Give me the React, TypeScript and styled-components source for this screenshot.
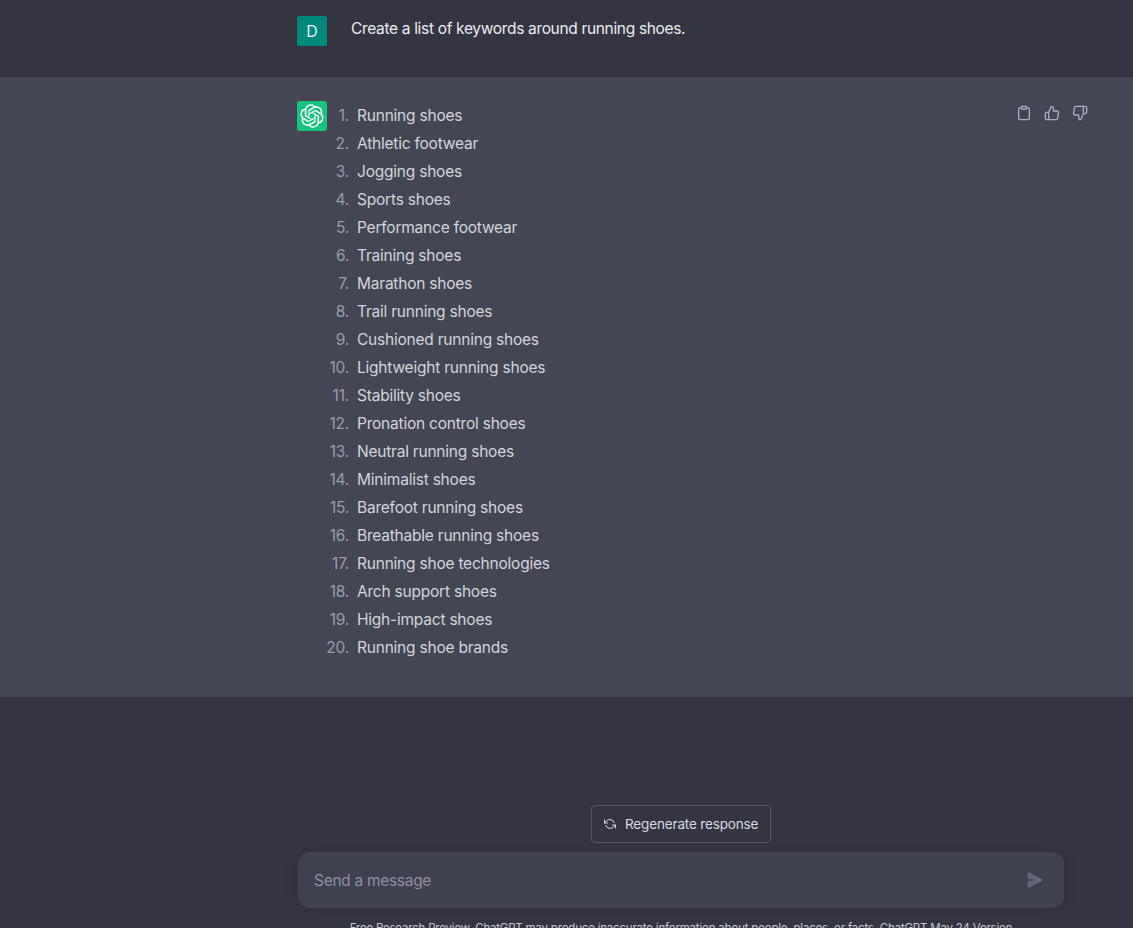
import React from "react";
import styled, { createGlobalStyle } from "styled-components";

const Global = createGlobalStyle`
  html, body { margin: 0; padding: 0; height: 100%; background: #343541; overflow: hidden; }
  body { font-family: Inter, "Liberation Sans", sans-serif; font-size: 16px; }
`;
const Page = styled.div`height: 928px; overflow: hidden; display: flex; flex-direction: column; background: #343541;`;
const UserRow = styled.section`
  flex: none; height: 76px; box-sizing: content-box; border-bottom: 1px solid #2b2c35; padding-left: 297px;
  display: flex; gap: 24px;
`;
const Avatar = styled.div<{ $bg: string }>`
  width: 30px; height: 30px; margin-top: ${p => (p.$bg === "user" ? "16px" : "0")};
  background: ${p => (p.$bg === "user" ? "#00897b" : "#19c37d")}; border-radius: 2px; color: #ececf1;
  display: flex; align-items: center; justify-content: center; font-size: 16px; flex: none;
`;
const UserText = styled.p`
  margin: 17px 0 0; line-height: 24px; color: #ececf1; font-size: 15.5px; letter-spacing: -0.33px;
`;
const AssistantRow = styled.section`
  flex: none; height: 620px; box-sizing: border-box; background: #444654; padding: 24px 0 0 297px;
  display: flex; gap: 24px;
`;
const AnswerColumn = styled.div`width: 741px; display: flex; justify-content: space-between;`;
const KeywordList = styled.ol`
  margin: 0; padding: 1px 0 0 6px; list-style: none; counter-reset: keyword; color: #d1d5db;
`;
const Keyword = styled.li`
  counter-increment: keyword; display: flex;
  line-height: 28px; font-size: 15.5px; letter-spacing: -0.22px;
  &::before {
    content: counter(keyword) ".";
    flex: none; width: 30px; margin: 0 8px 0 -38px; text-align: right; color: #9b9bab;
  }
`;
const Actions = styled.div`display: flex; gap: 4px; color: #acacbe; align-self: flex-start;`;
const ActionButton = styled.button`
  width: 24px; height: 24px; padding: 4px; border: 0; background: none; color: inherit; display: flex;
`;
const Composer = styled.section`
  flex: none; padding: 108px 0 0 298px; width: 766px; display: flex; flex-direction: column; align-items: center;
`;
const Regenerate = styled.button`
  height: 38px; width: 180px; box-sizing: border-box; display: flex; align-items: center; gap: 9px;
  padding: 0 12px; border: 1px solid #565869; border-radius: 4px; background: #343541; color: #d9d9e3;
  font: 13.5px Inter, "Liberation Sans", sans-serif; letter-spacing: -0.15px; white-space: nowrap;
  svg { flex: none; color: #d9d9e3; }
`;
const InputBox = styled.div`
  width: 766px; height: 56px; box-sizing: border-box; margin-top: 9px; padding: 0 21px 0 16px;
  display: flex; align-items: center; justify-content: space-between;
  background: #40414f; border-radius: 12px; box-shadow: 0 0 15px rgba(0, 0, 0, 0.1);
`;
const MessageInput = styled.input`
  flex: 1; border: 0; outline: 0; background: none; font: 15.5px Inter, "Liberation Sans", sans-serif; color: #ececf1;
  letter-spacing: -0.3px; padding: 0;
  &::placeholder { color: #8e8ea0; opacity: 1; }
`;
const SendIcon = styled.svg`width: 16px; height: 16px; color: #656675; flex: none;`;
const Footnote = styled.p`
  margin: 12px 0 0; font-size: 11.5px; line-height: 16px; color: #c5c5d2; white-space: nowrap; letter-spacing: -0.2px;
`;

const keywords = [
  "Running shoes", "Athletic footwear", "Jogging shoes", "Sports shoes", "Performance footwear",
  "Training shoes", "Marathon shoes", "Trail running shoes", "Cushioned running shoes",
  "Lightweight running shoes", "Stability shoes", "Pronation control shoes", "Neutral running shoes",
  "Minimalist shoes", "Barefoot running shoes", "Breathable running shoes", "Running shoe technologies",
  "Arch support shoes", "High-impact shoes", "Running shoe brands",
];

const stroke = { fill: "none", stroke: "currentColor", strokeWidth: 2, strokeLinecap: "round", strokeLinejoin: "round" } as const;

const Logo = () => (
  <svg width="24" height="24" viewBox="0 0 41 41" fill="none">
    <path fill="#fff" d="M37.5324 16.8707C37.9808 15.5241 38.1363 14.0974 37.9886 12.6859C37.8409 11.2744 37.3934 9.91076 36.676 8.68622C35.6126 6.83404 33.9882 5.3676 32.0373 4.4985C30.0864 3.62941 27.9098 3.40259 25.8215 3.85078C24.8796 2.7893 23.7219 1.94125 22.4257 1.36341C21.1295 0.785575 19.7249 0.491269 18.3058 0.500197C16.1708 0.495044 14.0893 1.16803 12.3614 2.42214C10.6335 3.67624 9.34853 5.44666 8.6917 7.47815C7.30085 7.76286 5.98686 8.3414 4.8377 9.17505C3.68854 10.0087 2.73073 11.0782 2.02839 12.312C0.956464 14.1591 0.498905 16.2988 0.721698 18.4228C0.944492 20.5467 1.83612 22.5449 3.268 24.1293C2.81966 25.4759 2.66413 26.9026 2.81182 28.3141C2.95951 29.7256 3.40701 31.0892 4.12437 32.3138C5.18791 34.1659 6.8123 35.6322 8.76321 36.5013C10.7141 37.3704 12.8907 37.5973 14.9789 37.1492C15.9208 38.2107 17.0786 39.0587 18.3747 39.6366C19.6709 40.2144 21.0755 40.5087 22.4946 40.4998C24.6307 40.5054 26.7133 39.8321 28.4418 38.5772C30.1704 37.3223 31.4556 35.5506 32.1119 33.5179C33.5027 33.2332 34.8167 32.6547 35.9659 31.821C37.115 30.9874 38.0728 29.9178 38.7752 28.684C39.8458 26.8371 40.3023 24.6979 40.0789 22.5748C39.8556 20.4517 38.9639 18.4544 37.5324 16.8707ZM22.4978 37.8849C20.7443 37.8874 19.0459 37.2733 17.6994 36.1501C17.7601 36.117 17.8666 36.0586 17.936 36.0161L25.9004 31.4156C26.1003 31.3019 26.2663 31.137 26.3813 30.9378C26.4964 30.7386 26.5563 30.5124 26.5549 30.2825V19.0542L29.9213 20.998C29.9389 21.0068 29.9541 21.0198 29.9656 21.0359C29.977 21.052 29.9842 21.0707 29.9867 21.0902V30.3889C29.9842 32.375 29.1946 34.2791 27.7909 35.6841C26.3872 37.0892 24.4838 37.8806 22.4978 37.8849ZM6.39227 31.0064C5.51397 29.4888 5.19742 27.7107 5.49804 25.9832C5.55718 26.0187 5.66048 26.0818 5.73461 26.1244L13.699 30.7248C13.8975 30.8408 14.1233 30.902 14.3532 30.902C14.583 30.902 14.8088 30.8408 15.0073 30.7248L24.731 25.1103V28.9979C24.7321 29.0177 24.7283 29.0376 24.7199 29.0556C24.7115 29.0736 24.6988 29.0893 24.6829 29.1012L16.6317 33.7497C14.9096 34.7416 12.8643 35.0097 10.9447 34.4954C9.02506 33.9811 7.38785 32.7263 6.39227 31.0064ZM4.29707 13.6194C5.17156 12.0998 6.55279 10.9364 8.19885 10.3327C8.19885 10.4013 8.19491 10.5228 8.19491 10.6071V19.808C8.19351 20.0378 8.25334 20.2638 8.36823 20.4629C8.48312 20.6619 8.64893 20.8267 8.84863 20.9404L18.5723 26.5542L15.206 28.4979C15.1894 28.5089 15.1703 28.5155 15.1505 28.5173C15.1307 28.5191 15.1107 28.516 15.0924 28.5082L7.04046 23.8557C5.32135 22.8601 4.06716 21.2235 3.55289 19.3046C3.03862 17.3858 3.30624 15.3413 4.29707 13.6194ZM31.955 20.0556L22.2312 14.4411L25.5976 12.4981C25.6142 12.4872 25.6333 12.4805 25.6531 12.4787C25.6729 12.4769 25.6928 12.4801 25.7111 12.4879L33.7631 17.1364C34.9967 17.849 36.0017 18.8982 36.6606 20.1613C37.3194 21.4244 37.6047 22.849 37.4832 24.2684C37.3617 25.6878 36.8382 27.0432 35.9743 28.1759C35.1103 29.3086 33.9415 30.1717 32.6047 30.6641C32.6047 30.5947 32.6047 30.4733 32.6047 30.3889V21.188C32.6066 20.9586 32.5474 20.7328 32.4332 20.5338C32.319 20.3348 32.154 20.1698 31.955 20.0556ZM35.3055 15.0128C35.2464 14.9765 35.1431 14.9142 35.069 14.8717L27.1045 10.2712C26.906 10.1554 26.6803 10.0943 26.4504 10.0943C26.2206 10.0943 25.9948 10.1554 25.7963 10.2712L16.0726 15.8858V11.9982C16.0715 11.9783 16.0753 11.9585 16.0837 11.9405C16.0921 11.9225 16.1048 11.9068 16.1207 11.8949L24.1719 7.25025C25.4053 6.53903 26.8158 6.19376 28.2383 6.25482C29.6608 6.31589 31.0364 6.78077 32.2044 7.59508C33.3723 8.40939 34.2842 9.53945 34.8334 10.8531C35.3826 12.1667 35.5464 13.6095 35.3055 15.0128ZM14.2424 21.9419L10.8752 19.9981C10.8576 19.9893 10.8423 19.9763 10.8309 19.9602C10.8195 19.9441 10.8122 19.9254 10.8098 19.9058V10.6071C10.8107 9.18295 11.2173 7.78848 11.9819 6.58696C12.7466 5.38544 13.8377 4.42659 15.1275 3.82264C16.4173 3.21869 17.8524 2.99464 19.2649 3.1767C20.6775 3.35876 22.0089 3.93941 23.1034 4.85067C23.0427 4.88379 22.937 4.94215 22.8668 4.98473L14.9024 9.58517C14.7025 9.69878 14.5366 9.86356 14.4215 10.0626C14.3065 10.2616 14.2466 10.4877 14.2479 10.7175L14.2424 21.9419ZM16.071 17.9991L20.4018 15.4978L24.7325 17.9975V22.9985L20.4018 25.4983L16.071 22.9985V17.9991Z" />
  </svg>
);

export default function App() {
  return (
    <Page>
      <Global />
      <UserRow>
        <Avatar $bg="user">D</Avatar>
        <UserText>Create a list of keywords around running shoes.</UserText>
      </UserRow>
      <AssistantRow>
        <Avatar $bg="bot"><Logo /></Avatar>
        <AnswerColumn>
          <KeywordList>
            {keywords.map(k => <Keyword key={k}>{k}</Keyword>)}
          </KeywordList>
          <Actions>
            <ActionButton aria-label="Copy">
              <svg width="16" height="16" viewBox="0 0 24 24" {...stroke}>
                <path d="M16 4h2a2 2 0 0 1 2 2v14a2 2 0 0 1-2 2H6a2 2 0 0 1-2-2V6a2 2 0 0 1 2-2h2" />
                <rect x="8" y="2" width="8" height="4" rx="1" ry="1" />
              </svg>
            </ActionButton>
            <ActionButton aria-label="Good">
              <svg width="16" height="16" viewBox="0 0 24 24" {...stroke}>
                <path d="M14 9V5a3 3 0 0 0-3-3l-4 9v11h11.28a2 2 0 0 0 2-1.7l1.38-9a2 2 0 0 0-2-2.3zM7 22H4a2 2 0 0 1-2-2v-7a2 2 0 0 1 2-2h3" />
              </svg>
            </ActionButton>
            <ActionButton aria-label="Bad">
              <svg width="16" height="16" viewBox="0 0 24 24" {...stroke}>
                <path d="M10 15v4a3 3 0 0 0 3 3l4-9V2H5.72a2 2 0 0 0-2 1.7l-1.38 9a2 2 0 0 0 2 2.3zm7-13h2.67A2.31 2.31 0 0 1 22 4v7a2.31 2.31 0 0 1-2.33 2H17" />
              </svg>
            </ActionButton>
          </Actions>
        </AnswerColumn>
      </AssistantRow>
      <Composer>
        <Regenerate>
          <svg width="12" height="12" viewBox="0 0 24 24" {...stroke}>
            <polyline points="1 4 1 10 7 10" />
            <polyline points="23 20 23 14 17 14" />
            <path d="M20.49 9A9 9 0 0 0 5.64 5.64L1 10m22 4l-4.64 4.36A9 9 0 0 1 3.51 15" />
          </svg>
          Regenerate response
        </Regenerate>
        <InputBox>
          <MessageInput placeholder="Send a message" />
          <SendIcon viewBox="0 0 16 16" fill="currentColor">
            <path d="M.5 1.163A1 1 0 0 1 1.97.28l12.868 6.837a1 1 0 0 1 0 1.766L1.969 15.72A1 1 0 0 1 .5 14.836V10.33a1 1 0 0 1 .816-.983L8.5 8 1.316 6.653A1 1 0 0 1 .5 5.67V1.163Z" />
          </SendIcon>
        </InputBox>
        <Footnote>Free Research Preview. ChatGPT may produce inaccurate information about people, places, or facts. ChatGPT May 24 Version</Footnote>
      </Composer>
    </Page>
  );
}
